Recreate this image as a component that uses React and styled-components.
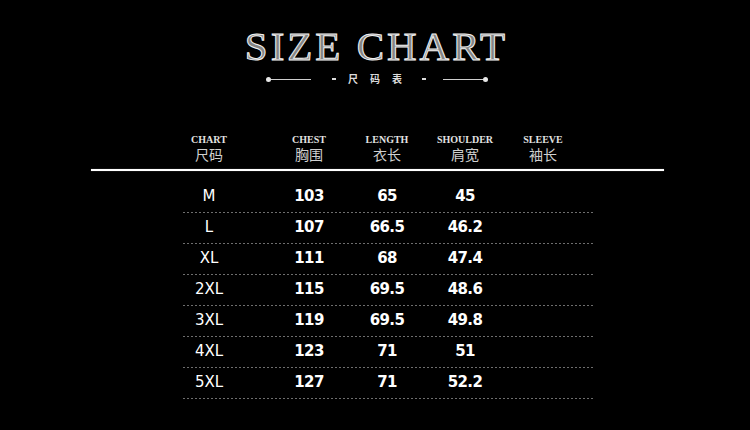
import React from 'react'
import styled, { createGlobalStyle } from 'styled-components'

const GlobalStyle = createGlobalStyle`
  html, body {
    margin: 0;
    padding: 0;
    background: #000;
  }
  body {
    width: 750px;
    height: 430px;
    overflow: hidden;
    font-family: "DejaVu Sans", sans-serif;
  }
`

const columns = [
  { en: 'CHART', zh: '尺码' },
  { en: 'CHEST', zh: '胸围' },
  { en: 'LENGTH', zh: '衣长' },
  { en: 'SHOULDER', zh: '肩宽' },
  { en: 'SLEEVE', zh: '袖长' },
]

const rows = [
  ['M', '103', '65', '45'],
  ['L', '107', '66.5', '46.2'],
  ['XL', '111', '68', '47.4'],
  ['2XL', '115', '69.5', '48.6'],
  ['3XL', '119', '69.5', '49.8'],
  ['4XL', '123', '71', '51'],
  ['5XL', '127', '71', '52.2'],
]

export default function App() {
  return (
    <Page>
      <GlobalStyle />
      <Title>SIZE CHART</Title>
      <Subtitle>
        <Dot />
        <Rule />
        <SubText>
          <Dash />
          <span>尺</span>
          <span>码</span>
          <span>表</span>
          <Dash $last />
        </SubText>
        <Rule />
        <Dot />
      </Subtitle>

      <Table>
        <HeaderRow>
          {columns.map((c, i) => (
            <HeadCell key={c.en} $first={i === 0}>
              <HeadEn>{c.en}</HeadEn>
              <HeadZh>{c.zh}</HeadZh>
            </HeadCell>
          ))}
        </HeaderRow>
        <HeaderLine />
        <Body>
          {rows.map((r) => (
            <Row key={r[0]}>
              <SizeCell>{r[0]}</SizeCell>
              <ValueCell>{r[1]}</ValueCell>
              <ValueCell>{r[2]}</ValueCell>
              <ValueCell>{r[3]}</ValueCell>
              <ValueCell />
            </Row>
          ))}
        </Body>
      </Table>
    </Page>
  )
}

const Page = styled.div`
  width: 750px;
  height: 430px;
  background: #000;
  display: flex;
  flex-direction: column;
  align-items: center;
  padding-top: 26px;
  box-sizing: border-box;
`

const Title = styled.h1`
  margin: 0;
  padding-left: 3px;
  font-family: "Liberation Serif", serif;
  font-weight: 400;
  font-size: 41px;
  line-height: 41px;
  letter-spacing: 3px;
  color: #858585;
  -webkit-text-stroke: 1px #f2f2f2;
`

const Subtitle = styled.div`
  margin-top: 6px;
  height: 12px;
  display: flex;
  align-items: center;
  padding-left: 4px;
`

const Dot = styled.span`
  width: 5px;
  height: 5px;
  border-radius: 50%;
  background: #e8e8e8;
`

const Rule = styled.span`
  width: 40px;
  height: 1px;
  background: #cfcfcf;
`

const SubText = styled.div`
  display: flex;
  align-items: center;
  gap: 12px;
  margin: 0 17px 0 21px;
  font-family: "Noto Sans CJK SC", sans-serif;
  font-size: 10px;
  font-weight: 700;
  line-height: 12px;
  color: #dcdcdc;
`

const Dash = styled.span`
  width: 4px;
  height: 2px;
  background: #dcdcdc;
  margin-left: ${(p) => (p.$last ? '8px' : '0')};
`

const Table = styled.div`
  align-self: flex-start;
  margin-left: 91px;
  margin-top: 50px;
  width: 573px;
`

const HeaderRow = styled.div`
  margin-left: 92px;
  display: grid;
  grid-template-columns: 87px repeat(4, 78px);
`

const HeadCell = styled.div`
  display: flex;
  flex-direction: column;
  align-items: center;
  padding-right: ${(p) => (p.$first ? '35px' : '0')};
`

const HeadEn = styled.div`
  font-family: "Liberation Serif", serif;
  font-weight: 700;
  font-size: 10px;
  line-height: 10px;
  color: #e2e2e2;
`

const HeadZh = styled.div`
  margin-top: 2px;
  font-family: "Noto Sans CJK SC", sans-serif;
  font-size: 14px;
  line-height: 14px;
  color: #d0d0d0;
`

const HeaderLine = styled.div`
  margin-top: 8px;
  height: 2px;
  background: #fff;
  box-shadow: 0 0 1px #9a9a9a;
`

const Body = styled.div`
  margin-top: 11px;
  margin-left: 92px;
  width: 411px;
`

const Row = styled.div`
  display: grid;
  grid-template-columns: 87px repeat(4, 78px);
  height: 31px;
  padding-bottom: 1px;
  box-sizing: border-box;
  line-height: 29px;
  background: repeating-linear-gradient(to right, #6e6e6e 0 2px, transparent 2px 4px)
    bottom / 100% 1px no-repeat;
`

const SizeCell = styled.div`
  padding-right: 35px;
  text-align: center;
  font-size: 15px;
  color: #fff;
`

const ValueCell = styled.div`
  text-align: center;
  font-size: 15px;
  font-weight: 700;
  letter-spacing: -0.6px;
  color: #fff;
`
